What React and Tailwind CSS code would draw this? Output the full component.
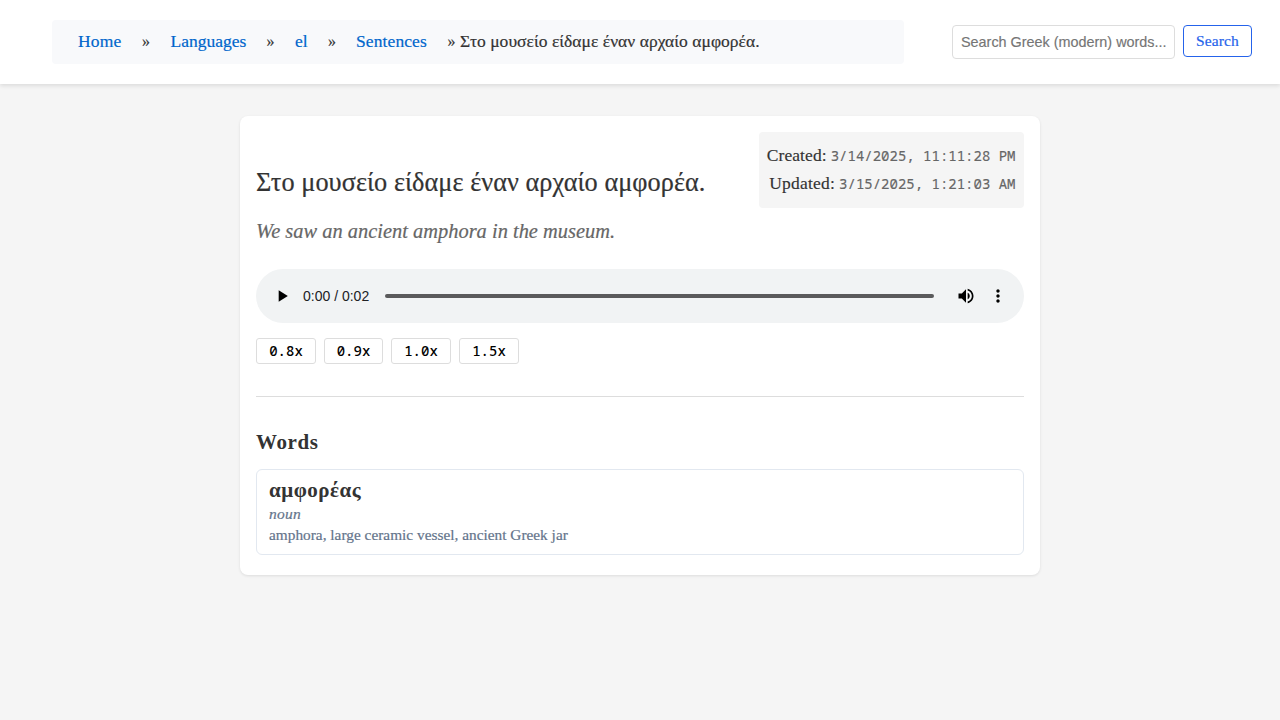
import React from "react";

const crumbs = [
  { label: "Home", link: "w-16 tracking-[0.18px]", sep: "w-[28.5px]" },
  { label: "Languages", link: "w-24", sep: "w-[28.5px]" },
  { label: "el", link: "w-[33px]", sep: "w-7" },
  { label: "Sentences", link: "w-[91.500px] tracking-[0.1px]", sep: "w-[12.5px]" },
];

const speeds = [
  { label: "0.8x", width: "w-[60px]" },
  { label: "0.9x", width: "w-[59px]" },
  { label: "1.0x", width: "w-[60px]" },
  { label: "1.5x", width: "w-[60px]" },
];

function Header() {
  return (
    <header className="flex h-[84px] items-start bg-white pt-5 pr-7 pl-13 shadow-[0_2px_4px_rgba(0,0,0,0.1)]">
      <nav className="flex h-11 w-[852px] items-center rounded bg-[#f8f9fb] pb-0.5 pl-[26px] text-[17.5px] whitespace-nowrap [-webkit-text-stroke:0.2px]">
        {crumbs.map((c) => (
          <React.Fragment key={c.label}>
            <a className={`${c.link} shrink-0 text-[#0066cc]`}>{c.label}</a>
            <span className={`${c.sep} shrink-0 pt-0.5 text-base`}>»</span>
          </React.Fragment>
        ))}
        <span className="tracking-[0.04px]">Στο μουσείο είδαμε έναν αρχαίο αμφορέα.</span>
      </nav>
      <form className="mt-[5px] ml-auto flex items-start gap-2">
        <input
          className="h-[34px] w-[223px] rounded border border-[#ddd] bg-white px-2 font-['Liberation_Sans',Arial,sans-serif] text-[14.4px] placeholder:text-[#757575] [-webkit-text-stroke:0.15px]"
          placeholder="Search Greek (modern) words..."
        />
        <button
          type="button"
          className="h-8 w-[69px] rounded border border-[#2563eb] bg-white pb-0.5 text-[15.5px] leading-[27px] tracking-[0.1px] text-[#2563eb] [-webkit-text-stroke:0.2px]"
        >
          Search
        </button>
      </form>
    </header>
  );
}

function Player() {
  return (
    <div className="mt-6 flex h-[54px] items-center rounded-full bg-[#f1f3f4] pl-4 text-black">
      <svg className="h-5 w-5" viewBox="0 0 24 24" fill="currentColor">
        <path d="M8 5v14l11-7z" />
      </svg>
      <span className="ml-[11px] w-[82px] font-['Liberation_Sans',Arial,sans-serif] text-sm text-[#202124]">0:00 / 0:02</span>
      <div className="h-1 w-[549px] rounded-full bg-[#5a5a5b]" />
      <svg className="ml-[22px] h-5 w-5" viewBox="0 0 24 24" fill="currentColor">
        <path d="M3 9v6h4l5 5V4L7 9H3zm13.5 3c0-1.77-1.02-3.29-2.5-4.03v8.05c1.48-.73 2.5-2.25 2.5-4.02zM14 3.23v2.06c2.89.86 5 3.54 5 6.71s-2.11 5.85-5 6.71v2.06c4.01-.91 7-4.49 7-8.77s-2.99-7.86-7-8.77z" />
      </svg>
      <svg className="ml-3 h-5 w-5" viewBox="0 0 24 24" fill="currentColor">
        <path d="M12 8c1.100 0 2-.9 2-2s-.9-2-2-2-2 .9-2 2 .9 2 2 2zm0 2c-1.100 0-2 .9-2 2s.9 2 2 2 2-.9 2-2-.9-2-2-2zm0 6c-1.100 0-2 .9-2 2s.9 2 2 2 2-.9 2-2-.9-2-2-2z" />
      </svg>
    </div>
  );
}

export default function App() {
  return (
    <div className="min-h-screen bg-[#f5f5f5] font-['Liberation_Serif',Georgia,serif] text-[#333]">
      <Header />
      <main className="mx-auto mt-8 h-[459px] w-[800px] rounded-lg bg-white p-4 shadow-[0_1px_3px_rgba(0,0,0,0.1)]">
        <div className="flex h-[76px] items-start justify-between">
          <h1 className="pt-[31px] text-[26.3px] leading-10 tracking-[0.04px] whitespace-nowrap [-webkit-text-stroke:0.2px]">
            Στο μουσείο είδαμε έναν αρχαίο αμφορέα.
          </h1>
          <div className="h-[76px] w-[265px] rounded bg-[#f5f5f5] pr-[8.5px] pl-[7px] pt-[9px] text-right text-[17.5px] leading-7 whitespace-nowrap [-webkit-text-stroke:0.15px]">
            <p className="flex h-7 items-baseline justify-end gap-1">
              <span className="tracking-[0.08px]">Created:</span>
              <span className="font-['Noto_Sans_Mono','Liberation_Mono',monospace] text-sm leading-7 text-[#666]">3/14/2025, 11:11:28 PM</span>
            </p>
            <p className="flex h-7 items-baseline justify-end gap-1">
              <span className="tracking-[0.22px]">Updated:</span>
              <span className="font-['Noto_Sans_Mono','Liberation_Mono',monospace] text-sm leading-7 text-[#666]">3/15/2025, 1:21:03 AM</span>
            </p>
          </div>
        </div>
        <p className="mt-[9px] text-[20.4px] leading-7 tracking-[0.02px] text-[#666] italic [-webkit-text-stroke:0.2px]">
          We saw an ancient amphora in the museum.
        </p>
        <Player />
        <div className="mt-[15px] flex gap-2">
          {speeds.map((s) => (
            <button
              key={s.label}
              className={`${s.width} h-[26px] rounded-[3px] border border-[#ddd] bg-white font-['Noto_Sans_Mono','Liberation_Mono',monospace] text-sm leading-6 font-medium text-black`}
            >
              {s.label}
            </button>
          ))}
        </div>
        <hr className="mt-8 border-[#ddd]" />
        <h2 className="mt-[29px] text-[21px] leading-8 font-bold tracking-[0.6px]">Words</h2>
        <section className="mt-[11px] h-[86px] rounded-md border border-[#e2e8f0] px-3 pt-1.5">
          <h3 className="h-[27px] text-[21px] leading-7 font-bold tracking-[0.5px]">αμφορέας</h3>
          <p className="text-[15.5px] leading-[21px] tracking-[0.25px] text-[#64748b] italic [-webkit-text-stroke:0.2px]">noun</p>
          <p className="text-[15.3px] leading-[21px] tracking-[0.02px] text-[#64748b] [-webkit-text-stroke:0.2px]">
            amphora, large ceramic vessel, ancient Greek jar
          </p>
        </section>
      </main>
    </div>
  );
}
